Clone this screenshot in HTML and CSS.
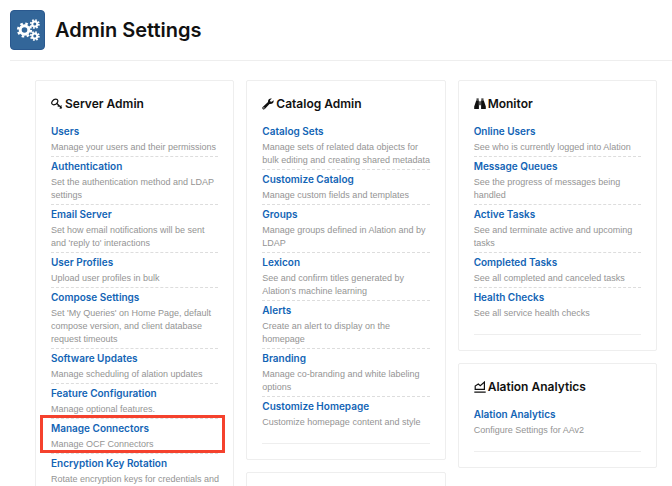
FILE: index.html
```html
<!DOCTYPE html>
<html lang="en">
<head>
<meta charset="utf-8">
<meta name="viewport" content="width=device-width, initial-scale=1">
<title>Admin Settings</title>
<link rel="stylesheet" href="styles.css">
</head>
<body>
<header class="page-header">
  <span class="badge">
    <svg class="badge-icon" viewBox="0 0 24 24" aria-hidden="true">
      <g fill="none" stroke="#fff">
        <circle cx="8.5" cy="12" r="4.3" stroke-width="3"/>
        <circle cx="8.5" cy="12" r="6.5" stroke-width="2.2" stroke-dasharray="2.6 2.505"/>
        <circle cx="18.8" cy="6" r="2.5" stroke-width="2"/>
        <circle cx="18.8" cy="6" r="4" stroke-width="1.8" stroke-dasharray="1.6 1.542"/>
        <circle cx="18.8" cy="18" r="2.5" stroke-width="2"/>
        <circle cx="18.8" cy="18" r="4" stroke-width="1.8" stroke-dasharray="1.6 1.542"/>
      </g>
    </svg>
  </span>
  <h1>Admin Settings</h1>
</header>
<main class="columns">
  <div class="column">
    <section class="card">
      <h2><svg class="icon" viewBox="0 0 12 12" aria-hidden="true"><g fill="none" stroke="#111" stroke-width="1.2" stroke-linejoin="round"><path d="M1.200 6.200C-.3 4.600 2 1.200 4.800 1.200c2.400 0 2.600 2.200 1.200 3.900C4.700 6.700 2.300 7.400 1.200 6.200Z"/><path d="M5.600 5.300 10.800 10.200M7.900 7.300 6.800 8.500M9.800 9.200 8.900 10.600M9.400 8.700 10.600 7.600"/></g></svg>Server Admin</h2>
      <ul>
        <li><a href="#">Users</a><p>Manage your users and their permissions</p></li>
        <li><a href="#">Authentication</a><p>Set the authentication method and LDAP settings</p></li>
        <li><a href="#">Email Server</a><p>Set how email notifications will be sent and 'reply to' interactions</p></li>
        <li><a href="#">User Profiles</a><p>Upload user profiles in bulk</p></li>
        <li><a href="#">Compose Settings</a><p>Set 'My Queries' on Home Page, default compose version, and client database request timeouts</p></li>
        <li><a href="#">Software Updates</a><p>Manage scheduling of alation updates</p></li>
        <li><a href="#">Feature Configuration</a><p>Manage optional features.</p></li>
        <li class="highlight"><a href="#">Manage Connectors</a><p>Manage OCF Connectors</p></li>
        <li><a href="#">Encryption Key Rotation</a><p>Rotate encryption keys for credentials and</p></li>
      </ul>
    </section>
  </div>
  <div class="column">
    <section class="card">
      <h2><svg class="icon" viewBox="0 0 12 12" aria-hidden="true"><path fill="#111" d="M11.6 2.2 9.7 3.7 8.3 3.5 8 2.2 9.900.6C8.200-.1 5.700 1 6 3.900L.7 8.900C-.6 10.200 1.300 12.300 2.800 11L7.500 5.900c2.500.5 4.600-1.400 4.100-3.700ZM1.900 10.500a.6.6 0 1 1 0-1.200.6.6 0 0 1 0 1.200Z"/></svg>Catalog Admin</h2>
      <ul>
        <li><a href="#">Catalog Sets</a><p>Manage sets of related data objects for bulk editing and creating shared metadata</p></li>
        <li><a href="#">Customize Catalog</a><p>Manage custom fields and templates</p></li>
        <li><a href="#">Groups</a><p>Manage groups defined in Alation and by LDAP</p></li>
        <li><a href="#">Lexicon</a><p>See and confirm titles generated by Alation's machine learning</p></li>
        <li><a href="#">Alerts</a><p>Create an alert to display on the homepage</p></li>
        <li><a href="#">Branding</a><p>Manage co-branding and white labeling options</p></li>
        <li><a href="#">Customize Homepage</a><p>Customize homepage content and style</p></li>
      </ul>
    </section>
    <section class="card"></section>
  </div>
  <div class="column">
    <section class="card">
      <h2><svg class="icon" viewBox="0 0 12 12" aria-hidden="true"><path fill="#111" d="M2.500.500h2.200v1.300H2.500ZM7.300.500h2.200v1.300H7.300ZM2.300 2.300h2.600V11H.2V8.500ZM7.100 2.300h2.600l2.100 6.200V11H7.100ZM5.300 3.200h1.400v4H5.300Z"/></svg>Monitor</h2>
      <ul>
        <li><a href="#">Online Users</a><p>See who is currently logged into Alation</p></li>
        <li><a href="#">Message Queues</a><p>See the progress of messages being handled</p></li>
        <li><a href="#">Active Tasks</a><p>See and terminate active and upcoming tasks</p></li>
        <li><a href="#">Completed Tasks</a><p>See all completed and canceled tasks</p></li>
        <li><a href="#">Health Checks</a><p>See all service health checks</p></li>
      </ul>
    </section>
    <section class="card">
      <h2><svg class="icon" viewBox="0 0 12 12" aria-hidden="true"><path fill="none" stroke="#111" stroke-width="1.2" d="M1.200 8.400V5L4.300 3.100 6.300 4.700 10.400 1.100V8.400ZM.3 11.200h11.400"/></svg>Alation Analytics</h2>
      <ul>
        <li><a href="#">Alation Analytics</a><p>Configure Settings for AAv2</p></li>
      </ul>
    </section>
  </div>
</main>
</body>
</html>
```
FILE: styles.css
```css
* {
  box-sizing: border-box;
}

body {
  margin: 0;
  background: #fff;
  color: #111;
  font-family: Inter, "Liberation Sans", sans-serif;
}

h1, h2, p, ul {
  margin: 0;
  padding: 0;
}

.page-header {
  display: flex;
  align-items: center;
  gap: 10px;
  margin-left: 10px;
  padding: 10px 0;
  border-bottom: 1px solid #eee;
}

.badge {
  display: flex;
  align-items: center;
  justify-content: center;
  width: 35px;
  height: 40px;
  border: 1px solid #2a588e;
  border-radius: 4px;
  background: #336699;
}

.badge-icon {
  width: 24px;
  height: 24px;
}

h1 {
  font-size: 20px;
  line-height: 24px;
  font-weight: 600;
}

.columns {
  display: grid;
  grid-template-columns: repeat(3, minmax(0, 1fr));
  gap: 12px;
  padding: 19px 15px 12px 35px;
}

.column {
  display: flex;
  flex-direction: column;
  gap: 12px;
}

.card {
  min-height: 60px;
  padding: 15px;
  border: 1px solid #eee;
  border-radius: 2px;
}

h2 {
  display: flex;
  align-items: center;
  gap: 2px;
  margin-bottom: 10px;
  font-size: 12px;
  line-height: 16px;
  font-weight: 600;
}

.icon {
  width: 12px;
  height: 12px;
}

ul {
  padding-bottom: 12px;
  border-bottom: 1px solid #eee;
  list-style: none;
}

li {
  position: relative;
  padding: 2px 0;
  border-bottom: 1px dashed #ddd;
}

li:last-child {
  border-bottom: 0;
}

a {
  display: block;
  margin-bottom: 2px;
  color: #1264b5;
  font-size: 10px;
  line-height: 15px;
  font-weight: 600;
  text-decoration: none;
}

p {
  margin-right: -2px;
  color: #949494;
  font-family: "Liberation Sans", Arial, sans-serif;
  font-size: 9px;
  line-height: 13px;
}

.highlight::after {
  content: "";
  position: absolute;
  inset: -4px -7px 0 -11px;
  border: 3px solid #f5412d;
  pointer-events: none;
}
```
